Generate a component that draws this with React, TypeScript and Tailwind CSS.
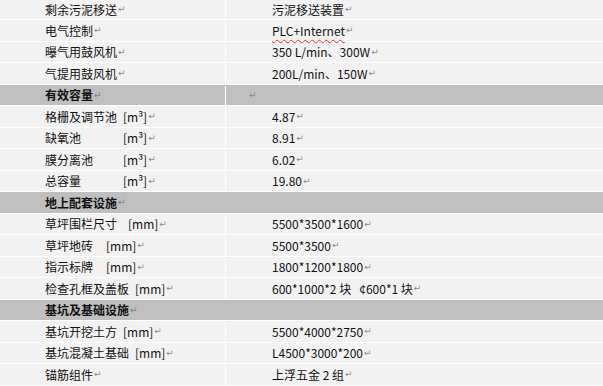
import React from "react";

type Row =
  | { kind: "head"; label: string; split?: boolean }
  | { kind: "item"; label: string; unit?: string; gap?: string; value: string; wavy?: boolean };

const ROWS: Row[] = [
  { kind: "item", label: "剩余污泥移送", value: "污泥移送装置" },
  { kind: "item", label: "电气控制", value: "PLC+Internet", wavy: true },
  { kind: "item", label: "曝气用鼓风机", value: "350 L/min、300W" },
  { kind: "item", label: "气提用鼓风机", value: "200L/min、150W" },
  { kind: "head", label: "有效容量", split: true },
  { kind: "item", label: "格栅及调节池", unit: "[m³]", gap: "ml-[6px]", value: "4.87" },
  { kind: "item", label: "缺氧池", unit: "[m³]", gap: "ml-[42px]", value: "8.91" },
  { kind: "item", label: "膜分离池", unit: "[m³]", gap: "ml-[30px]", value: "6.02" },
  { kind: "item", label: "总容量", unit: "[m³]", gap: "ml-[42px]", value: "19.80" },
  { kind: "head", label: "地上配套设施" },
  { kind: "item", label: "草坪围栏尺寸", unit: "[mm]", gap: "ml-[11px]", value: "5500*3500*1600" },
  { kind: "item", label: "草坪地砖", unit: "[mm]", gap: "ml-[13px]", value: "5500*3500" },
  { kind: "item", label: "指示标牌", unit: "[mm]", gap: "ml-[13px]", value: "1800*1200*1800" },
  { kind: "item", label: "检查孔框及盖板", unit: "[mm]", gap: "ml-[6px]", value: "600*1000*2 块   ¢600*1 块" },
  { kind: "head", label: "基坑及基础设施" },
  { kind: "item", label: "基坑开挖土方", unit: "[mm]", gap: "ml-[6px]", value: "5500*4000*2750" },
  { kind: "item", label: "基坑混凝土基础", unit: "[mm]", gap: "ml-[6px]", value: "L4500*3000*200" },
  { kind: "item", label: "锚筋组件", value: "上浮五金 2 组" },
];

function Mark() {
  return (
    <span className="ml-px text-[9px] text-[#8c8c8c] [font-family:'DejaVu_Sans',sans-serif]">↵</span>
  );
}

export default function App() {
  return (
    <div className="w-[603px] h-[386px] overflow-hidden bg-white text-[12px] text-[#111] [font-family:'Noto_Sans_CJK_SC','Noto_Sans',sans-serif]">
      {ROWS.map((r, i) => {
        const h = i === 0 ? "h-[20px] pb-0" : "h-[21.5px] pt-[1px]";
        if (r.kind === "head") {
          return (
            <div key={r.label} className={`flex border-b border-white bg-[#bfbfbf] font-bold ${h}`}>
              <div className={`flex items-center pl-[45px] ${r.split ? "w-[226px] border-r border-white" : ""}`}>
                {r.label}
                <Mark />
              </div>
              {r.split && (
                <div className="flex items-center pl-[22px] font-normal">
                  <Mark />
                </div>
              )}
            </div>
          );
        }
        return (
          <div key={r.label} className={`flex border-b border-white bg-[#f2f2f2] ${h}`}>
            <div className="flex w-[226px] items-center whitespace-pre border-r border-white pl-[45px]">
              {r.label}
              {r.unit && <span className={r.gap}>{r.unit}</span>}
              <Mark />
            </div>
            <div className="flex items-center whitespace-pre pl-[46px]">
              <span className={r.wavy ? "underline decoration-wavy decoration-[#e0312f] decoration-1 underline-offset-[3px]" : ""}>
                {r.value}
              </span>
              <Mark />
            </div>
          </div>
        );
      })}
    </div>
  );
}
